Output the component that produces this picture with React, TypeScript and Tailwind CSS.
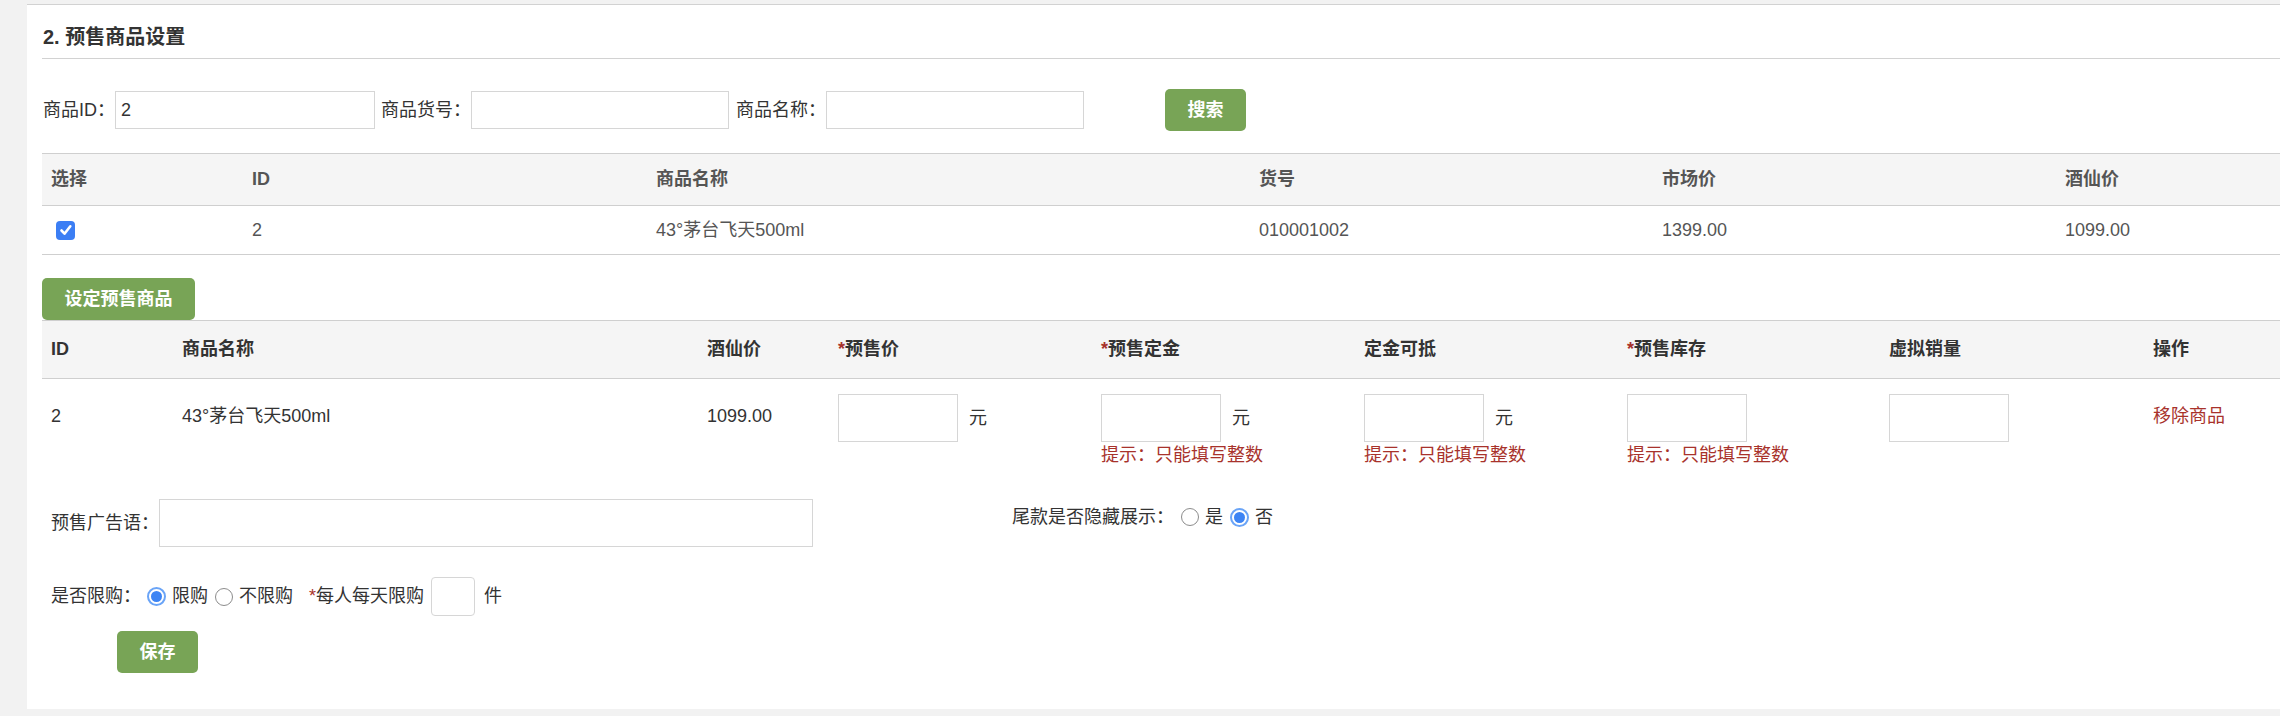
import React from "react";

const red = "text-[#a8322b]";

function Radio({ checked }: { checked?: boolean }) {
  return checked ? (
    <span className="inline-flex h-[19px] w-[19px] items-center justify-center rounded-full border-[2px] border-[#6aa4f7] bg-white">
      <span className="h-[11px] w-[11px] rounded-full bg-[#3d84f4]" />
    </span>
  ) : (
    <span className="inline-block h-[18px] w-[18px] rounded-full border border-[#8c8c8c] bg-white" />
  );
}

function Checkbox() {
  return (
    <span className="inline-flex h-[19px] w-[19px] items-center justify-center rounded-[4px] bg-[#3b7ef4]">
      <svg viewBox="0 0 16 16" className="h-[16px] w-[16px]" fill="none">
        <path d="M3.5 8.5l3 3.2 5.8-7.4" stroke="white" strokeWidth="2.6" strokeLinecap="round" strokeLinejoin="round" />
      </svg>
    </span>
  );
}

function PriceInput({ hint, unit = true }: { hint?: boolean; unit?: boolean }) {
  return (
    <div className="flex flex-col">
      <div className="flex h-[48px] items-center">
        <input className="h-[48px] w-[120px] border border-[#d6d6d6] bg-white" readOnly />
        {unit && <span className="ml-[11px]">元</span>}
      </div>
      {hint && <div className={`mt-[3px] leading-[20px] ${red}`}>提示：只能填写整数</div>}
    </div>
  );
}

export default function App() {
  const searchCols = ["选择", "ID", "商品名称", "货号", "市场价", "酒仙价"];
  const presaleCols = [
    { t: "ID" },
    { t: "商品名称" },
    { t: "酒仙价" },
    { t: "预售价", req: true },
    { t: "预售定金", req: true },
    { t: "定金可抵" },
    { t: "预售库存", req: true },
    { t: "虚拟销量" },
    { t: "操作" },
  ];

  return (
    <div className="h-[716px] w-[2280px] overflow-hidden bg-[#f2f2f2] pt-[4px] pl-[27px] font-['Liberation_Sans','Noto_Sans_CJK_SC',sans-serif] text-[18px] text-[#333]">
      <div className="border-t border-[#d2d2d2] bg-white pb-[36px] pl-[15px]">
        {/* section title */}
        <h2 className="border-b border-[#d2d2d2] pt-[20px] pb-[9px] pl-[1px] text-[20px] leading-[24px] font-bold text-[#333]">
          2. 预售商品设置
        </h2>

        {/* search bar */}
        <div className="mt-[30px] flex h-[42px] items-center pl-[1px]">
          <span>商品ID：</span>
          <input
            className="h-[38px] w-[260px] border border-[#d6d6d6] bg-white px-[5px] text-[18px] text-[#333]"
            defaultValue="2"
          />
          <span className="ml-[6px]">商品货号：</span>
          <input className="h-[38px] w-[258px] border border-[#d6d6d6] bg-white" readOnly />
          <span className="ml-[7px]">商品名称：</span>
          <input className="h-[38px] w-[258px] border border-[#d6d6d6] bg-white" readOnly />
          <button className="ml-[81px] h-[42px] w-[81px] rounded-[5px] bg-[#78a456] font-bold text-white">
            搜索
          </button>
        </div>

        {/* search result table */}
        <div className="mt-[22px] border-t border-[#cfcfcf]">
          <div className="grid h-[52px] grid-cols-[201px_404px_603px_403px_403px_1fr] items-center border-b border-[#cfcfcf] bg-[#f5f5f5] font-bold text-[#555]">
            {searchCols.map((c) => (
              <div key={c} className="pl-[9px]">
                {c}
              </div>
            ))}
          </div>
          <div className="grid h-[49px] grid-cols-[201px_404px_603px_403px_403px_1fr] items-center border-b border-[#cfcfcf] text-[#555]">
            <div className="flex pl-[14px]">
              <Checkbox />
            </div>
            <div className="pl-[9px]">2</div>
            <div className="pl-[9px]">43°茅台飞天500ml</div>
            <div className="pl-[9px]">010001002</div>
            <div className="pl-[9px]">1399.00</div>
            <div className="pl-[9px]">1099.00</div>
          </div>
        </div>

        <button className="mt-[23px] block h-[42px] w-[153px] rounded-[5px] bg-[#78a456] font-bold text-white">
          设定预售商品
        </button>

        {/* presale goods table */}
        <div className="border-t border-[#cfcfcf]">
          <div className="grid h-[58px] grid-cols-[131px_525px_131px_263px_263px_263px_262px_264px_1fr] items-center border-b border-[#cfcfcf] bg-[#f5f5f5] font-bold text-[#333]">
            {presaleCols.map((c) => (
              <div key={c.t} className="pl-[9px]">
                {c.req && <span className="text-[#a8322b]">*</span>}
                {c.t}
              </div>
            ))}
          </div>
          <div className="grid grid-cols-[131px_525px_131px_263px_263px_263px_262px_264px_1fr] items-start pt-[15px] pb-[5px]">
            <div className="pl-[9px] leading-[44px]">2</div>
            <div className="pl-[9px] leading-[44px]">43°茅台飞天500ml</div>
            <div className="pl-[9px] leading-[44px]">1099.00</div>
            <div className="pl-[9px]">
              <PriceInput />
            </div>
            <div className="pl-[9px]">
              <PriceInput hint />
            </div>
            <div className="pl-[9px]">
              <PriceInput hint />
            </div>
            <div className="pl-[9px]">
              <PriceInput hint unit={false} />
            </div>
            <div className="pl-[9px]">
              <PriceInput unit={false} />
            </div>
            <div className={`pl-[9px] leading-[44px] ${red}`}>移除商品</div>
          </div>
        </div>

        {/* ad slogan + tail payment */}
        <div className="mt-[29px] flex items-start pl-[9px]">
          <div className="flex items-center">
            <span>预售广告语：</span>
            <input className="h-[48px] w-[654px] border border-[#d6d6d6] bg-white" readOnly />
          </div>
          <div className="mt-[8px] ml-[199px] flex items-center leading-[20px]">
            <span>尾款是否隐藏展示：</span>
            <span className="ml-[7px] flex items-center">
              <Radio />
            </span>
            <span className="ml-[6px]">是</span>
            <span className="ml-[7px] flex items-center">
              <Radio checked />
            </span>
            <span className="ml-[6px]">否</span>
          </div>
        </div>

        {/* purchase limit */}
        <div className="mt-[30px] flex h-[39px] items-center pl-[9px]">
          <span>是否限购：</span>
          <span className="ml-[6px] flex">
            <Radio checked />
          </span>
          <span className="ml-[6px]">限购</span>
          <span className="ml-[7px] flex">
            <Radio />
          </span>
          <span className="ml-[6px]">不限购</span>
          <span className="ml-[16px]">
            <span className="text-[#a8322b]">*</span>每人每天限购
          </span>
          <input className="ml-[7px] h-[39px] w-[44px] rounded-[4px] border border-[#d6d6d6] bg-white" readOnly />
          <span className="ml-[9px]">件</span>
        </div>

        <button className="mt-[15px] ml-[75px] block h-[42px] w-[81px] rounded-[5px] bg-[#78a456] font-bold text-white">
          保存
        </button>
      </div>
    </div>
  );
}
